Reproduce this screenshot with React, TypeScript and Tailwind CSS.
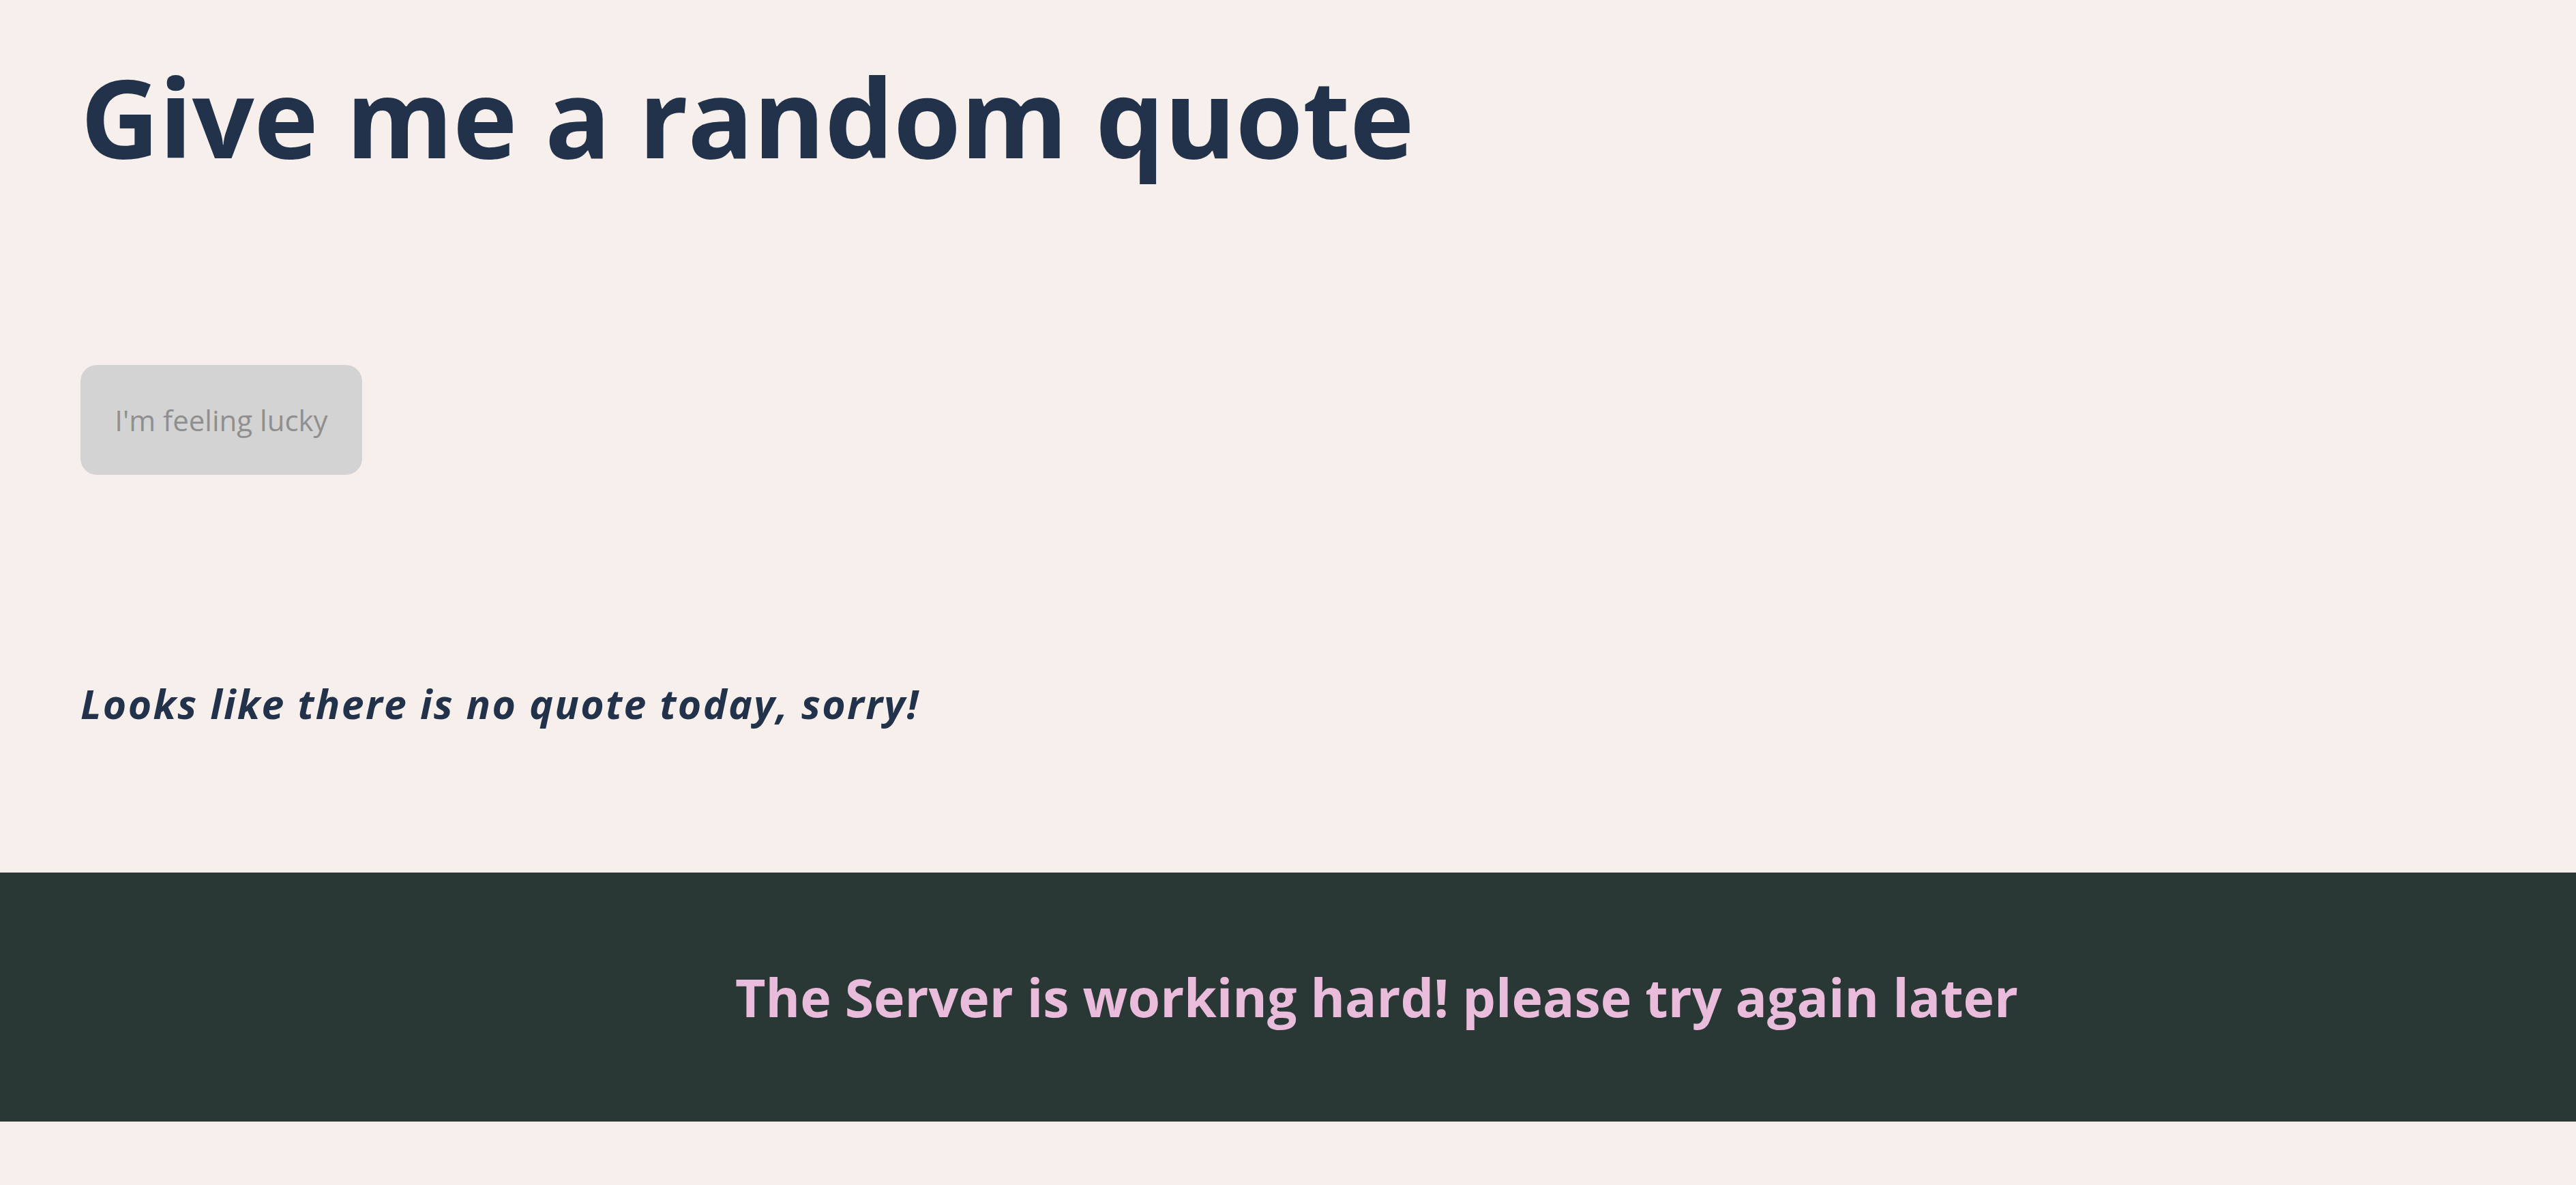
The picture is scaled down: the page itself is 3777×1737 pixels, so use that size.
export default function App() {
  return (
    <div className="min-h-screen w-full bg-[#f7efeb]" style={{ fontFamily: '"Open Sans", sans-serif' }}>
      <div className="px-[118px] pt-[90px]">
        <h1 className="m-0 text-[160px] leading-[160px] font-bold tracking-[-0.5px] text-[#22324a] whitespace-nowrap">Give me a random quote</h1>
        <button
          disabled
          className="mt-[285px] flex h-[161px] w-[413px] items-center justify-center rounded-[24px] bg-[#d3d3d3] text-[42px] text-[#8f8f8f]"
        >
          I'm feeling lucky
        </button>
        <p className="mt-[306px] text-[59px] leading-[59px] font-bold italic tracking-[2.3px] text-[#22324a] whitespace-nowrap">
          Looks like there is no quote today, sorry!
        </p>
      </div>
      <footer className="mt-[218px] flex h-[365px] items-center justify-center bg-[#2a3835] pl-[260px]">
        <h2 className="text-[77px] font-bold text-[#e8bcda] whitespace-nowrap">The Server is working hard! please try again later</h2>
      </footer>
    </div>
  );
}
